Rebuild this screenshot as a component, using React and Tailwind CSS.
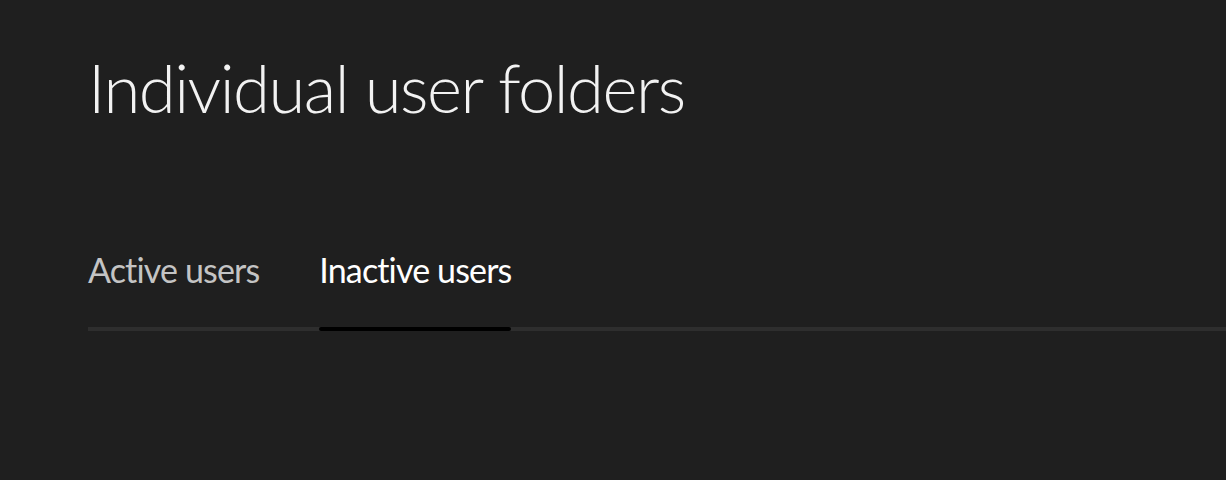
export default function App() {
  const tabs = [
    { label: "Active users", active: false },
    { label: "Inactive users", active: true },
  ];
  return (
    <div className="min-h-screen w-full bg-[#1f1f1f] pl-[88px] pt-[54px]" style={{ fontFamily: "Lato, 'Noto Sans', sans-serif" }}>
      <h1 className="text-[67px] font-light leading-none tracking-[-1.5px] text-[#f2f2f2]">Individual user folders</h1>
      <div className="mt-[132px] flex gap-[60px] border-b-4 border-[#2e2e2e]">
        {tabs.map((t) => (
          <div key={t.label} className="-mb-1 flex flex-col">
            <span className={`text-[34px] leading-none tracking-[-0.85px] ${t.active ? "text-[#ffffff]" : "text-[#c4c4c4]"}`}>{t.label}</span>
            <div className={`mt-[40px] h-1 w-full rounded-full ${t.active ? "bg-black" : "bg-transparent"}`} />
          </div>
        ))}
      </div>
    </div>
  );
}
